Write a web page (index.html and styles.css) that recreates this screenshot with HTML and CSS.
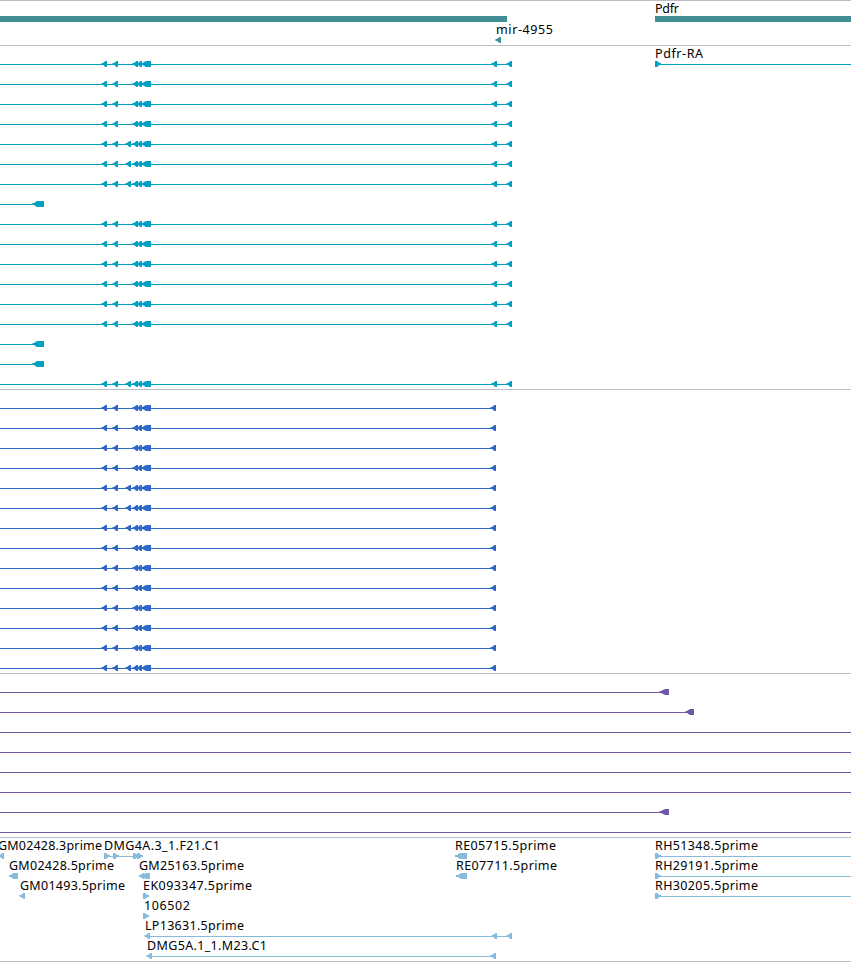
FILE: index.html
```
<!DOCTYPE html>
<html lang="en">
<head>
<meta charset="utf-8">
<title>Genome tracks</title>
<link rel="stylesheet" href="styles.css">
</head>
<body>
<svg class="defs" aria-hidden="true">
  <defs>
    <path id="left" d="M.5 17H2L4.5 15H6V21H4.5L2 19H.5Z"/>
    <path id="right" d="M6 17H4.5L2 15H0V21H2L4.5 19H6Z"/>
    <g id="cluster">
      <use href="#left" x="101"/><use href="#left" x="112"/><use href="#left" x="132"/><use href="#left" x="136"/>
      <path d="M141 17H142.5L146 15H151V21H146L142.5 19H141Z"/>
    </g>
    <g id="transcript">
      <path d="M0 18H507V19H0Z"/><use href="#cluster"/><use href="#left" x="491"/><use href="#left" x="506"/>
    </g>
    <g id="transcript-long"><use href="#transcript"/><use href="#left" x="125"/></g>
    <path id="short" d="M0 18H32.5V17H34L37 15H44V21H37L34 19H0Z"/>
    <g id="coding"><path d="M0 18H491V19H0Z"/><use href="#cluster"/><use href="#left" x="490"/></g>
    <g id="coding-long"><use href="#coding"/><use href="#left" x="125"/></g>
    <path id="span" d="M0 18H851V19H0Z"/>
    <path id="purple-end" d="M0 18H659.5V17H661L665 15H669V21H665L661 19H0Z"/>
    <g id="forward"><path d="M655 18H851V19H655Z"/><use href="#right" x="655"/></g>
  </defs>
</svg>
<main class="browser">
  <section class="track genes">
    <svg class="row gene-row"><path d="M0 15H507V21H0ZM655 15H851V21H655Z"/><text x="655" y="12" textLength="24">Pdfr</text></svg>
    <svg class="row"><text x="496" y="12" textLength="57">mir-4955</text><use href="#left" x="495"/></svg>
  </section>
  <section class="track transcripts">
    <svg class="row"><use href="#transcript"/><use href="#forward"/><text x="655" y="12" textLength="48">Pdfr-RA</text></svg>
    <svg class="row"><use href="#transcript"/></svg>
    <svg class="row"><use href="#transcript"/></svg>
    <svg class="row"><use href="#transcript"/></svg>
    <svg class="row"><use href="#transcript-long"/></svg>
    <svg class="row"><use href="#transcript-long"/></svg>
    <svg class="row"><use href="#transcript-long"/></svg>
    <svg class="row"><use href="#short"/></svg>
    <svg class="row"><use href="#transcript"/></svg>
    <svg class="row"><use href="#transcript"/></svg>
    <svg class="row"><use href="#transcript"/></svg>
    <svg class="row"><use href="#transcript"/></svg>
    <svg class="row"><use href="#transcript"/></svg>
    <svg class="row"><use href="#transcript"/></svg>
    <svg class="row"><use href="#short"/></svg>
    <svg class="row"><use href="#short"/></svg>
    <svg class="row"><use href="#transcript-long"/></svg>
  </section>
  <section class="track coding">
    <svg class="row"><use href="#coding"/></svg>
    <svg class="row"><use href="#coding"/></svg>
    <svg class="row"><use href="#coding"/></svg>
    <svg class="row"><use href="#coding"/></svg>
    <svg class="row"><use href="#coding-long"/></svg>
    <svg class="row"><use href="#coding-long"/></svg>
    <svg class="row"><use href="#coding-long"/></svg>
    <svg class="row"><use href="#coding"/></svg>
    <svg class="row"><use href="#coding"/></svg>
    <svg class="row"><use href="#coding"/></svg>
    <svg class="row"><use href="#coding"/></svg>
    <svg class="row"><use href="#coding"/></svg>
    <svg class="row"><use href="#coding"/></svg>
    <svg class="row"><use href="#coding-long"/></svg>
  </section>
  <section class="track predictions">
    <svg class="row"><use href="#purple-end"/></svg>
    <svg class="row"><path d="M0 18H685.5V17H687L690 15H694V21H690L687 19H0Z"/></svg>
    <svg class="row"><use href="#span"/></svg>
    <svg class="row"><use href="#span"/></svg>
    <svg class="row"><use href="#span"/></svg>
    <svg class="row"><use href="#span"/></svg>
    <svg class="row"><use href="#purple-end"/></svg>
    <svg class="row"><use href="#span"/></svg>
  </section>
  <section class="track clones">
    <svg class="row">
      <text x="-2" y="12" textLength="104">GM02428.3prime</text><use href="#left" x="-2"/>
      <text x="104" y="12" textLength="116">DMG4A.3_1.F21.C1</text><path d="M104 18H135V19H104Z"/>
      <use href="#right" x="104"/><use href="#right" x="113"/><use href="#right" x="133"/><use href="#right" x="137"/>
      <text x="455" y="12" textLength="101">RE05715.5prime</text><path d="M455 17H457L460 15H467V21H460L457 19H455Z"/>
      <text x="655" y="12" textLength="103">RH51348.5prime</text><use href="#forward"/>
    </svg>
    <svg class="row">
      <text x="9" y="12" textLength="105">GM02428.5prime</text><path d="M9 17H10.5L13.5 15H18V21H13.5L10.5 19H9Z"/>
      <text x="139" y="12" textLength="105">GM25163.5prime</text><use href="#left" x="138.5"/><path d="M142 17H143.5L146 15H150V21H146L143.5 19H142Z"/>
      <text x="456" y="12" textLength="101">RE07711.5prime</text><path d="M456 17H458L461 15H467V21H461L458 19H456Z"/>
      <text x="655" y="12" textLength="103">RH29191.5prime</text><use href="#forward"/>
    </svg>
    <svg class="row">
      <text x="20" y="12" textLength="105">GM01493.5prime</text><use href="#left" x="19"/>
      <text x="143" y="12" textLength="109">EK093347.5prime</text><use href="#right" x="143"/>
      <text x="655" y="12" textLength="103">RH30205.5prime</text><use href="#forward"/>
    </svg>
    <svg class="row"><text x="144" y="12" textLength="46">106502</text><use href="#right" x="143"/></svg>
    <svg class="row"><text x="145" y="12" textLength="99">LP13631.5prime</text><path d="M146 18H507V19H146Z"/><use href="#left" x="144"/><use href="#left" x="491"/><use href="#left" x="506"/></svg>
    <svg class="row"><text x="147" y="12" textLength="120">DMG5A.1_1.M23.C1</text><path d="M148 18H491V19H148Z"/><use href="#left" x="146"/><use href="#left" x="490"/></svg>
  </section>
</main>
</body>
</html>
```
FILE: styles.css
```
body {
  margin: 0;
  background: #fff;
  overflow: hidden;
}

.defs {
  display: block;
  width: 0;
  height: 0;
}

.browser {
  display: flex;
  flex-direction: column;
  width: 851px;
  height: 962px;
  box-sizing: border-box;
  border-bottom: 1px solid #bebebe;
}

.track {
  display: flex;
  flex-direction: column;
  box-sizing: border-box;
  border-top: 1px solid #bebebe;
  padding-bottom: 3px;
}

.row {
  display: block;
  width: 851px;
  height: 20px;
  flex: none;
  overflow: visible;
  fill: currentColor;
}

.row text {
  font: 12.5px "Noto Sans", sans-serif;
  fill: #000;
}

.gene-row { height: 21px; }
.genes { color: #408f94; }
.transcripts { color: #00a0c0; }
.coding { color: #3068c8; }
.predictions { color: #7358a6; }
.clones { color: #86bbdd; }
```
